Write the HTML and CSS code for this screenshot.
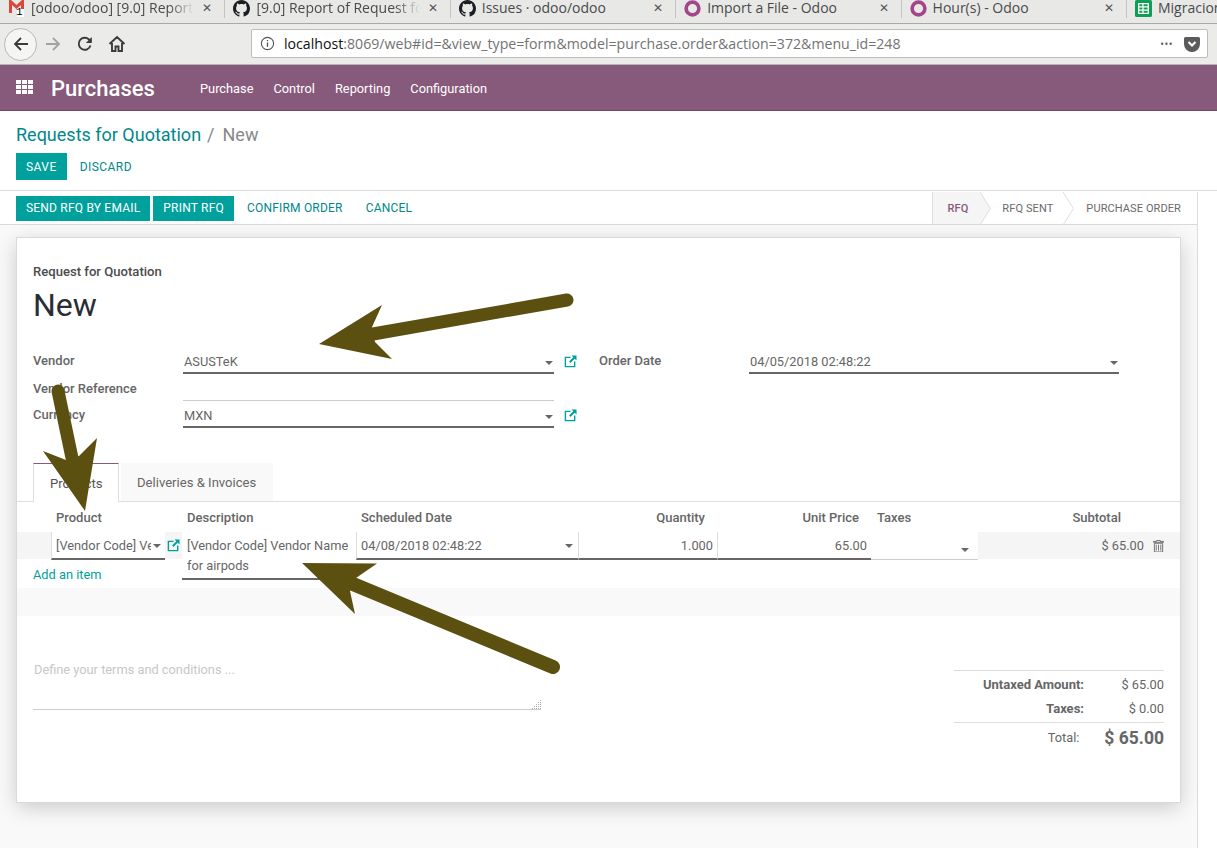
FILE: index.html
```html
<!DOCTYPE html>
<html lang="en">
<head>
<meta charset="utf-8">
<title>Requests for Quotation - Odoo</title>
<link rel="stylesheet" href="styles.css">
</head>
<body>
<div class="tabs">
  <div class="tab">
    <svg class="fav" viewBox="0 0 17 17"><path d="M1 0h2l5.500 5L14 0h2v13h-3V5L8.500 9 4 5v8H1z" fill="#d9483b"/><rect x="9" y="9" width="7" height="9" fill="#fff"/></svg>
    <span class="badge">1</span>
    <span class="tab-title">[odoo/odoo] [9.0] Report of Request</span>
    <span class="tab-x">✕</span>
  </div>
  <div class="tab">
    <svg class="fav" viewBox="0 0 16 16"><path fill="#1b1f23" d="M8 0C3.580 0 0 3.580 0 8c0 3.540 2.290 6.530 5.470 7.590.4.070.55-.17.55-.38 0-.19-.01-.82-.01-1.490-2.010.37-2.530-.49-2.690-.94-.09-.23-.48-.94-.82-1.130-.28-.15-.68-.52-.01-.53.63-.01 1.080.58 1.230.82.72 1.210 1.870.87 2.330.66.07-.52.28-.87.51-1.070-1.780-.2-3.640-.89-3.640-3.950 0-.87.31-1.590.82-2.150-.08-.2-.36-1.020.08-2.120 0 0 .67-.21 2.200.82.64-.18 1.320-.27 2-.27.68 0 1.360.09 2 .27 1.530-1.040 2.200-.82 2.200-.82.44 1.100.16 1.920.08 2.120.51.56.82 1.270.82 2.150 0 3.070-1.870 3.750-3.650 3.950.29.25.54.73.54 1.480 0 1.070-.01 1.930-.01 2.200 0 .21.15.46.55.38A8.013 8.013 0 0016 8c0-4.420-3.580-8-8-8z"/></svg>
    <span class="tab-title">[9.0] Report of Request for Quotation</span>
    <span class="tab-x">✕</span>
  </div>
  <div class="tab">
    <svg class="fav" viewBox="0 0 16 16"><path fill="#1b1f23" d="M8 0C3.580 0 0 3.580 0 8c0 3.540 2.290 6.530 5.470 7.590.4.070.55-.17.55-.38 0-.19-.01-.82-.01-1.490-2.010.37-2.530-.49-2.690-.94-.09-.23-.48-.94-.82-1.130-.28-.15-.68-.52-.01-.53.63-.01 1.080.58 1.230.82.72 1.210 1.870.87 2.330.66.07-.52.28-.87.51-1.070-1.780-.2-3.640-.89-3.640-3.950 0-.87.31-1.590.82-2.150-.08-.2-.36-1.020.08-2.120 0 0 .67-.21 2.200.82.64-.18 1.320-.27 2-.27.68 0 1.360.09 2 .27 1.530-1.040 2.200-.82 2.200-.82.44 1.100.16 1.920.08 2.120.51.56.82 1.270.82 2.150 0 3.070-1.870 3.750-3.650 3.950.29.25.54.73.54 1.480 0 1.070-.01 1.930-.01 2.200 0 .21.15.46.55.38A8.013 8.013 0 0016 8c0-4.420-3.580-8-8-8z"/></svg>
    <span class="tab-title plain">Issues · odoo/odoo</span>
    <span class="tab-x">✕</span>
  </div>
  <div class="tab">
    <svg class="fav" viewBox="0 0 16 16"><circle cx="8" cy="8" r="6" fill="none" stroke="#a24689" stroke-width="3.400"/></svg>
    <span class="tab-title plain">Import a File - Odoo</span>
    <span class="tab-x">✕</span>
  </div>
  <div class="tab">
    <svg class="fav" viewBox="0 0 16 16"><circle cx="8" cy="8" r="6" fill="none" stroke="#a24689" stroke-width="3.400"/></svg>
    <span class="tab-title plain">Hour(s) - Odoo</span>
    <span class="tab-x">✕</span>
  </div>
  <div class="tab tab-last">
    <svg class="fav" viewBox="0 0 16 16"><rect width="16" height="16" rx="1.500" fill="#0f9d58"/><path d="M3.500 3.500h9v9h-9zM3.500 6.500h9M3.500 9.500h9M7.500 3.500v9" fill="none" stroke="#fff" stroke-width="1.200"/></svg>
    <span class="tab-title plain">Migracion</span>
  </div>
</div>

<div class="toolbar">
  <span class="back">
    <svg viewBox="0 0 18 18" class="tb-icon"><path d="M16 9H3M9 3L3 9l6 6" fill="none" stroke="#3b3b3b" stroke-width="1.800"/></svg>
  </span>
  <svg viewBox="0 0 18 18" class="tb-icon fwd"><path d="M2 9h13M9 3l6 6-6 6" fill="none" stroke="#a3a3a3" stroke-width="1.800"/></svg>
  <svg viewBox="0 0 18 18" class="tb-icon reload"><path d="M14.500 10.500A6 6 0 1 1 13 4.500L15 6.500" fill="none" stroke="#3b3b3b" stroke-width="1.900"/><path d="M15.800 2v6h-6z" fill="#3b3b3b"/></svg>
  <svg viewBox="0 0 18 18" class="tb-icon home"><path d="M1.500 9L9 2l7.500 7M4 8v8h3.500v-4.500h3V16H14V8" fill="none" stroke="#3b3b3b" stroke-width="1.900"/></svg>
  <div class="urlbar">
    <svg viewBox="0 0 16 16" class="info"><circle cx="8" cy="8" r="6.500" fill="none" stroke="#555" stroke-width="1.200"/><path d="M7.300 7h1.400v4.500H7.300zM7.300 4.200h1.400v1.500H7.300z" fill="#555"/></svg>
    <span class="url"><b>localhost</b>:8069/web#id=&amp;view_type=form&amp;model=purchase.order&amp;action=372&amp;menu_id=248</span>
    <span class="dots">•••</span>
    <svg viewBox="0 0 16 16" class="pocket"><path d="M1.500 1h13A1.500 1.500 0 0 1 16 2.500V8A8 8 0 0 1 0 8V2.500A1.500 1.500 0 0 1 1.500 1z" fill="#5b5b5b"/><path d="M4.500 6L8 9.500 11.500 6" fill="none" stroke="#fff" stroke-width="2.200"/></svg>
  </div>
</div>

<nav class="navbar">
  <svg class="apps" viewBox="0 0 17 14"><path fill="#fff" d="M0 0h5v4H0zM6 0h5v4H6zM12 0h5v4h-5zM0 5h5v4H0zM6 5h5v4H6zM12 5h5v4h-5zM0 10h5v4H0zM6 10h5v4H6zM12 10h5v4h-5z"/></svg>
  <span class="brand">Purchases</span>
  <ul class="menu">
    <li>Purchase</li>
    <li>Control</li>
    <li>Reporting</li>
    <li>Configuration</li>
  </ul>
</nav>

<div class="main">
  <div class="content">
    <header class="control">
      <div class="crumbs"><a>Requests for Quotation</a><span class="sep">/</span><span class="cur">New</span></div>
      <div class="actions">
        <span class="btn primary">SAVE</span>
        <span class="btn link">DISCARD</span>
      </div>
    </header>
    <div class="statusbar">
      <div class="actions tight">
        <span class="btn primary">SEND RFQ BY EMAIL</span>
        <span class="btn primary">PRINT RFQ</span>
        <span class="btn link">CONFIRM ORDER</span>
        <span class="btn link">CANCEL</span>
      </div>
      <div class="steps">
        <span class="step active">RFQ<svg class="chev" viewBox="0 0 11 33"><path d="M0 0l10.500 16.500L0 33" fill="#f5f5f5" stroke="#ddd"/></svg></span>
        <span class="step mid">RFQ SENT<svg class="chev" viewBox="0 0 11 33"><path d="M0 0l10.500 16.500L0 33" fill="#fff" stroke="#ddd"/></svg></span>
        <span class="step last">PURCHASE ORDER</span>
      </div>
    </div>

    <div class="backdrop">
      <section class="sheet">
        <div class="head">
          <div class="doc-label">Request for Quotation</div>
          <h1>New</h1>
        </div>
        <div class="fields">
          <div class="col-left">
            <div class="field h1">
              <label>Vendor</label>
              <div class="input strong"><span>ASUSTeK</span><i class="caret"></i></div>
              <svg class="ext" viewBox="0 0 14 14"><path d="M7 2.500H1.500v10h10V7" fill="none" stroke="#00a09d" stroke-width="1.500"/><path d="M8 0.500h5.500V6l-2-2-4.500 4.500L5.500 7 10 2.500z" fill="#00a09d"/></svg>
            </div>
            <div class="field h2">
              <label>Vendor Reference</label>
              <div class="input thin"></div>
            </div>
            <div class="field h3">
              <label>Currency</label>
              <div class="input strong"><span>MXN</span><i class="caret"></i></div>
              <svg class="ext" viewBox="0 0 14 14"><path d="M7 2.500H1.500v10h10V7" fill="none" stroke="#00a09d" stroke-width="1.500"/><path d="M8 0.500h5.500V6l-2-2-4.500 4.500L5.500 7 10 2.500z" fill="#00a09d"/></svg>
            </div>
          </div>
          <div class="col-right">
            <div class="field h1">
              <label>Order Date</label>
              <div class="input strong wide"><span>04/05/2018 02:48:22</span><i class="caret"></i></div>
            </div>
          </div>
        </div>

        <div class="nav-tabs">
          <span class="ftab on">Products</span>
          <span class="ftab">Deliveries &amp; Invoices</span>
        </div>

        <div class="lines">
          <div class="lrow lhead">
            <span class="c-prod">Product</span>
            <span class="c-desc">Description</span>
            <span class="c-date">Scheduled Date</span>
            <span class="c-qty">Quantity</span>
            <span class="c-price">Unit Price</span>
            <span class="c-tax">Taxes</span>
            <span class="c-sub">Subtotal</span>
            <span class="c-del"></span>
          </div>
          <div class="lrow lbody">
            <span class="c-prod cell dark"><span class="clip">[Vendor Code] Vendor Name for airpods</span><i class="caret"></i></span>
            <span class="c-extlink"><svg class="ext" viewBox="0 0 14 14"><path d="M7 2.500H1.500v10h10V7" fill="none" stroke="#00a09d" stroke-width="1.500"/><path d="M8 0.500h5.500V6l-2-2-4.500 4.500L5.500 7 10 2.500z" fill="#00a09d"/></svg></span>
            <span class="c-desc cell tall">[Vendor Code] Vendor Name for airpods</span>
            <span class="c-date cell dark"><span>04/08/2018 02:48:22</span><i class="caret"></i></span>
            <span class="c-qty cell dark">1.000</span>
            <span class="c-price cell dark">65.00</span>
            <span class="c-tax cell light"><i class="caret"></i></span>
            <span class="c-sub amount">$ 65.00</span>
            <span class="c-del"><svg class="trash" viewBox="0 0 12 13"><path d="M4 1.500V.5h4v1h3.500v1H.5v-1zM1.500 3.500h9V13h-9zM3.500 5v6.500M6 5v6.500M8.500 5v6.500" fill="none" stroke="#6b6b6b" stroke-width="1"/></svg></span>
          </div>
          <div class="add-item">Add an item</div>
          <div class="stripe"></div>
        </div>

        <div class="bottom">
          <div class="terms">
            <span>Define your terms and conditions ...</span>
            <svg class="grip" viewBox="0 0 9 9"><path d="M8 0h1v1H8zM8 2h1v1H8zM6 2h1v1H6zM8 4h1v1H8zM6 4h1v1H6zM4 4h1v1H4zM8 6h1v1H8zM6 6h1v1H6zM4 6h1v1H4zM2 6h1v1H2zM8 8h1v1H8zM6 8h1v1H6zM4 8h1v1H4zM2 8h1v1H2zM0 8h1v1H0z" fill="#aaa"/></svg>
          </div>
          <div class="totals">
            <div class="t-row"><b>Untaxed Amount:</b><span>$ 65.00</span></div>
            <div class="t-row"><b>Taxes:</b><span>$ 0.00</span></div>
            <div class="t-row grand"><span class="t-lab">Total:</span><b>$ 65.00</b></div>
          </div>
        </div>
      </section>
    </div>
  </div>
</div>

<svg class="arrows" viewBox="0 0 1217 848">
  <path d="M567 300L373 334" stroke="#5c5011" stroke-width="13" stroke-linecap="round" fill="none"/>
  <path d="M319 344L382 305L372 327L375 342L392 359z" fill="#5c5011"/>
  <path d="M58 391L72 458" stroke="#5c5011" stroke-width="13" stroke-linecap="round" fill="none"/>
  <path d="M85 511L43 451L66 460L79 456L97 438z" fill="#5c5011"/>
  <path d="M553 667L353 584" stroke="#5c5011" stroke-width="14" stroke-linecap="round" fill="none"/>
  <path d="M302 563L377 563.500L356 578L350 591L355 614z" fill="#5c5011"/>
</svg>
</body>
</html>
```
FILE: styles.css
```css
* { box-sizing: border-box; }
html, body { margin: 0; padding: 0; height: 100%; overflow: hidden; }
body { width: 1217px; height: 848px; background: #fff; font: 12.800px/18px Roboto, "Liberation Sans", sans-serif; color: #666; }

/* browser chrome */
.tabs { display: flex; height: 24px; background: #e8e8e7; border-bottom: 1px solid #a9a9a9; overflow: hidden; font-family: "Open Sans", "Noto Sans", sans-serif; }
.tab { position: relative; flex: 0 0 225.400px; min-width: 0; display: flex; align-items: center; padding: 0 10px 0 8px; border-right: 1px solid #c4c4c4; color: #4a4a4a; font-size: 14px; height: 20px; margin-top: -2px; }
.tab-last { border-right: 0; }
.fav { width: 17px; height: 17px; flex: none; margin-right: 6px; }
.badge { position: absolute; left: 16px; top: 8px; font: 11px/12px "Liberation Mono", monospace; color: #000; }
.tab-title { flex: 1; min-width: 0; white-space: nowrap; overflow: hidden; -webkit-mask-image: linear-gradient(90deg, #000 85%, transparent); mask-image: linear-gradient(90deg, #000 85%, transparent); }
.tab-title.plain { -webkit-mask-image: none; mask-image: none; }
.tab-x { flex: none; font-size: 12px; margin-left: 6px; color: #555; width: 14px; text-align: center; }

.toolbar { display: flex; align-items: center; height: 41px; background: #ebebea; border-bottom: 1px solid #b4b4b4; padding-left: 4px; }
.back { width: 33px; height: 33px; flex: none; border: 1px solid #b7b7b7; border-radius: 50%; background: #f5f5f4; display: flex; align-items: center; justify-content: center; }
.tb-icon { width: 18px; height: 18px; flex: none; }
.fwd { margin-left: 7px; }
.reload { margin-left: 14px; }
.home { margin-left: 14px; }
.urlbar { display: flex; align-items: center; width: 957px; height: 29px; margin: -1px 0 0 125px; background: #fff; border: 1px solid #bdbdbd; border-radius: 2px; font: 14.150px "Open Sans", "Noto Sans", sans-serif; color: #737373; padding: 0 4px 0 8px; }
.info { width: 15px; height: 15px; flex: none; margin-right: 9px; }
.url { flex: 1; white-space: nowrap; }
.url b { font-weight: 400; color: #111; }
.dots { font-size: 10px; letter-spacing: 0.5px; color: #555; margin-right: 11px; }
.pocket { width: 16px; height: 16px; flex: none; margin-right: 3px; }

/* navbar */
.navbar { display: flex; align-items: center; height: 46px; background: #875a7b; border-bottom: 1px solid #6d4a63; color: #fff; padding: 3px 0 0 16px; }
.apps { width: 17px; height: 14px; flex: none; margin-top: -4px; }
.brand { font-size: 22px; font-weight: 500; margin-left: 18px; width: 149px; }
.menu { display: flex; gap: 20px; list-style: none; margin: 0; padding: 0; }

/* control panel */
.main { height: 737px; }
.content { width: 1198px; height: 100%; display: flex; flex-direction: column; }
.control { height: 79px; padding: 14px 16px 0; flex: none; }
.crumbs { font-size: 18px; line-height: 20px; height: 28px; color: #888; }
.crumbs a { color: #00888a; }
.sep { margin: 0 8px 0 6px; }
.actions { display: flex; }
.btn { display: inline-block; font-size: 12px; font-weight: 400; letter-spacing: 0.2px; line-height: 18px; padding: 4px 10px; white-space: nowrap; }
.control .btn { padding: 4.500px 10px; height: 27px; letter-spacing: 0.45px; }
.control .link { padding-left: 13px; }
.primary { background: #00a09d; color: #fff; }
.link { color: #00888a; }
.tight { gap: 3px; align-items: center; }
.tight .btn { height: 25px; padding: 3.500px 10px; }
.tight .link { padding: 3.500px 0; margin-left: 10px; }
.tight .link + .link { margin-left: 20px; }

.statusbar { display: flex; justify-content: space-between; align-items: center; height: 35px; width: 1217px; flex: none; border-top: 1px solid #d9d9d9; padding-left: 16px; position: relative; }
.statusbar::after { content: ""; position: absolute; left: 0; bottom: 0; width: 1197px; height: 1px; background: #d9d9d9; }
.steps { display: flex; height: 33px; font-size: 11px; color: #6a6a6a; margin-right: 19px; border-right: 1px solid #ddd; }
.step { position: relative; display: flex; align-items: center; letter-spacing: 0.1px; padding-top: 1px; }
.step.active { background: #f5f5f5; color: #875a7b; font-weight: 500; border-left: 1px solid #ddd; padding-left: 14px; padding-right: 13px; }
.step.mid { padding-left: 21px; padding-right: 11px; }
.step.last { padding-left: 22px; padding-right: 16px; }
.chev { position: absolute; right: -10px; top: 0; width: 11px; height: 33px; z-index: 1; }

/* sheet */
.backdrop { flex: 1; background: #f9f9f9; border-right: 1px solid #ddd; padding: 12px 16px 0; }
.sheet { width: 1165px; height: 566px; background: #fff; border: 1px solid #d9d9d9; box-shadow: 0 5px 20px -1px rgba(0, 0, 0, .2); padding: 25px 16px 0; }
.doc-label { font-weight: 500; font-size: 13.100px; line-height: 18px; color: #4c4c4c; }
h1 { font-size: 32px; font-weight: 400; line-height: 38px; margin: 5px 0 0; color: #2c2c36; }
.fields { display: flex; margin-top: 28px; }
.col-left { width: 566px; }
.col-right { flex: 1; }
.field { display: flex; align-items: flex-start; position: relative; }
.h1 { height: 28px; }
.h2 { height: 26px; }
.h3 { height: 27px; }
label { font-weight: 500; font-size: 13px; line-height: 18px; color: #666; width: 150px; flex: none; }
.input { width: 371px; height: 22px; padding: 1px 1px 0; border-bottom: 2px solid #666; display: flex; justify-content: space-between; color: #666; }
.input.thin { border-bottom: 1px solid #ccc; height: 21px; }
.input.wide { width: 370px; }
.caret { width: 0; height: 0; border: 4px solid transparent; border-top-color: #666; border-bottom: 0; align-self: center; margin-right: 0; flex: none; }
.ext { width: 13px; height: 13px; flex: none; margin: 3px 0 0 10px; }

.nav-tabs { display: flex; margin: 30px -16px 0; padding-left: 16px; border-bottom: 1px solid #ddd; height: 39px; font-size: 13.100px; }
.ftab { height: 38px; padding: 11px 16.500px 0 16px; margin-right: 2px; background: #f9f9f9; }
.ftab.on { background: #fff; border: 1px solid #ddd; border-top: 1px solid #875a7b; border-bottom: 0; height: 39px; width: 86px; color: #555; padding: 11px 16px 0; }

.lines { margin: 0 -16px; }
.lrow { display: grid; grid-template-rows: 27px; grid-template-columns: 34px 114px 17px 174px 222px 139px 154px 107px 1fr 16px 43px; }
.lhead { grid-template-rows: 28px; height: 30px; align-items: center; font-weight: 500; font-size: 13px; padding-top: 2px; }
.lhead span { padding: 0 5px; }
.lhead .c-prod { grid-column: 2 / 4; }
.lhead .c-qty, .lhead .c-price { padding-right: 12px; }
.lhead .c-tax { padding-left: 6px; }
.lhead .c-sub { margin-right: 0; padding-right: 0; }
.c-prod { grid-column: 2; }
.c-extlink { grid-column: 3; background: #f5f5f5; }
.c-extlink .ext { margin: 7px 0 0 2px; }
.c-desc { grid-column: 4; }
.c-date { grid-column: 5; }
.c-qty { grid-column: 6; text-align: right; }
.c-price { grid-column: 7; text-align: right; }
.c-tax { grid-column: 8; }
.c-sub { grid-column: 9; text-align: right; }
.c-del { grid-column: 11; }
.lbody { height: 27px; background: linear-gradient(90deg, #f5f5f5 34px, #fff 34px, #fff 961px, #f5f5f5 961px); }
.cell { display: flex; justify-content: space-between; align-items: center; height: 28px; padding: 0 5px; background: #fff; }
.cell.dark { border-bottom: 2px solid #666; padding-top: 1px; }
.cell.light { border-bottom: 1px solid #ccc; padding: 0 9px 0 5px; }
.cell.c-qty, .cell.c-price { justify-content: flex-end; border-left: 1px solid #ddd; padding-right: 4px; }
.cell.c-date { border-left: 1px solid #ddd; padding-left: 4px; }
.cell.c-tax .caret { margin: 8px 0 0 auto; }
.cell.c-prod { padding-left: 4px; padding-right: 4px; border-left: 1px solid #ddd; }
.clip { display: block; width: 95px; overflow: hidden; white-space: nowrap; }
.tall { display: block; height: 48px; padding: 4px 5px 0; line-height: 19.500px; border-bottom: 2px solid #666; z-index: 1; position: relative; }
.amount { align-self: center; margin-right: -23px; }
.c-del { display: flex; align-items: center; justify-content: center; }
.trash { width: 11px; height: 12px; }
.add-item { padding: 7px 0 0 16px; height: 29px; color: #00a09d; }
.stripe { height: 28px; background: #f9f9f9; }

.bottom { display: flex; justify-content: space-between; margin-top: 45px; }
.terms { position: relative; width: 508px; height: 49px; border-bottom: 1px solid #ccc; color: #c7c7c7; }
.terms span { margin-left: 1px; }
.grip { position: absolute; right: 0; bottom: 0; width: 9px; height: 9px; }
.totals { width: 210px; margin-top: 9px; border-top: 1px solid #ddd; }
.t-row { display: flex; justify-content: flex-end; height: 24px; align-items: center; }
.t-row b { font-weight: 700; font-size: 13px; }
.t-row > span, .t-row > b { text-align: right; }
.t-row > :last-child { width: 80px; }
.t-row:nth-child(1) { margin-top: 2px; }
.grand { border-top: 1px solid #ddd; height: 30px; margin-top: 1px; }
.t-row.grand b { font-size: 17.500px; width: auto; margin-left: 25px; }
.t-row .t-lab { width: auto; }

/* drawn annotation */
.arrows { position: absolute; left: 0; top: 0; width: 1217px; height: 848px; pointer-events: none; z-index: 5; }
```
